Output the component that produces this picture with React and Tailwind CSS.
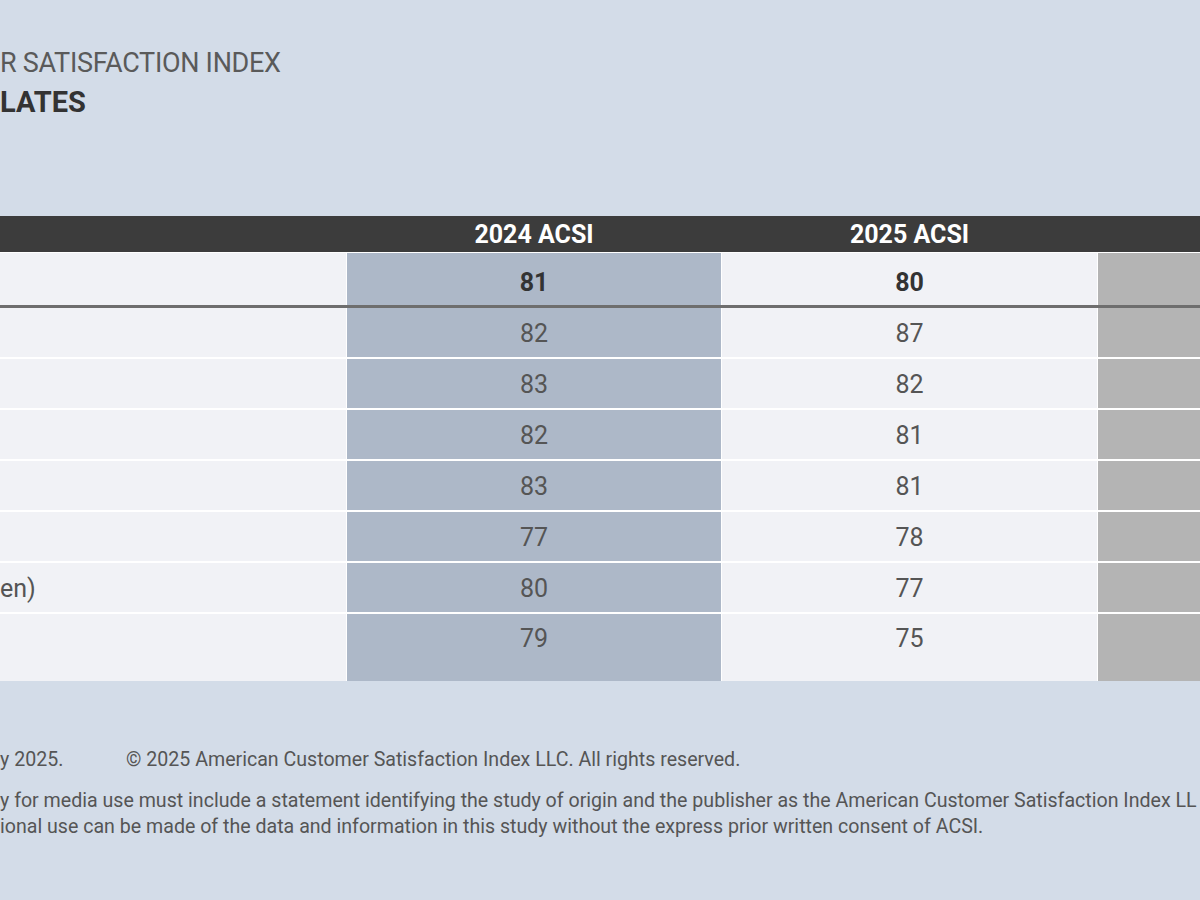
const rows = [
  { label: "", a: "82", b: "87" },
  { label: "", a: "83", b: "82" },
  { label: "", a: "82", b: "81" },
  { label: "", a: "83", b: "81" },
  { label: "", a: "77", b: "78" },
  { label: "en)", a: "80", b: "77" },
  { label: "", a: "79", b: "75", last: true },
];

const cols = "grid grid-cols-[346px_374px_375px_1fr] gap-x-[1px]";

export default function App() {
  return (
    <div
      className="w-[1200px] h-[900px] overflow-hidden bg-[#d3dce8] text-[#555]"
      style={{ fontFamily: "Roboto, 'Liberation Sans', sans-serif" }}
    >
      <div className="pt-[46px] pl-0">
        <div className="text-[27px] leading-[34px] tracking-[-0.3px] text-[#5a5a5a]">R SATISFACTION INDEX</div>
        <div className="text-[29px] leading-[36px] font-bold text-[#333] mt-[4px]">LATES</div>
      </div>

      <div className="mt-[96px] bg-white">
        <div className={`${cols} bg-[#3c3c3c] h-[36px] items-center text-white font-bold text-[25px]`}>
          <div />
          <div className="text-center">2024 ACSI</div>
          <div className="text-center">2025 ACSI</div>
          <div />
        </div>
        <div className={`${cols} h-[55px] mt-[1px] border-b-[3px] border-[#6e6e6e] text-[25px] font-bold text-[#333]`}>
          <div className="bg-[#f1f2f6]" />
          <div className="bg-[#adb8c8] flex items-center justify-center pt-[8px]">81</div>
          <div className="bg-[#f1f2f6] flex items-center justify-center pt-[8px]">80</div>
          <div className="bg-[#b4b4b4]" />
        </div>
        <div className="flex flex-col gap-[2px]">
          {rows.map((r, i) => (
            <div
              key={i}
              className={`${cols} text-[25px] ${r.last ? "h-[67px]" : "h-[49px]"}`}
            >
              <div className={`bg-[#f1f2f6] flex ${r.last ? "pt-[6px]" : "items-center pt-[2px]"}`}>{r.label}</div>
              <div className={`bg-[#adb8c8] flex justify-center ${r.last ? "pt-[6px]" : "items-center pt-[2px]"}`}>{r.a}</div>
              <div className={`bg-[#f1f2f6] flex justify-center ${r.last ? "pt-[6px]" : "items-center pt-[2px]"}`}>{r.b}</div>
              <div className="bg-[#b4b4b4]" />
            </div>
          ))}
        </div>
      </div>

      <div className="mt-[66px] text-[19.6px] leading-[26px] text-[#555] whitespace-nowrap">
        <div className="flex">
          <span className="w-[126px]">y 2025.</span>
          <span>© 2025 American Customer Satisfaction Index LLC. All rights reserved.</span>
        </div>
        <div className="mt-[15px]">
          y for media use must include a statement identifying the study of origin and the publisher as the American Customer Satisfaction Index LL
        </div>
        <div>
          ional use can be made of the data and information in this study without the express prior written consent of ACSI.
        </div>
      </div>
    </div>
  );
}
